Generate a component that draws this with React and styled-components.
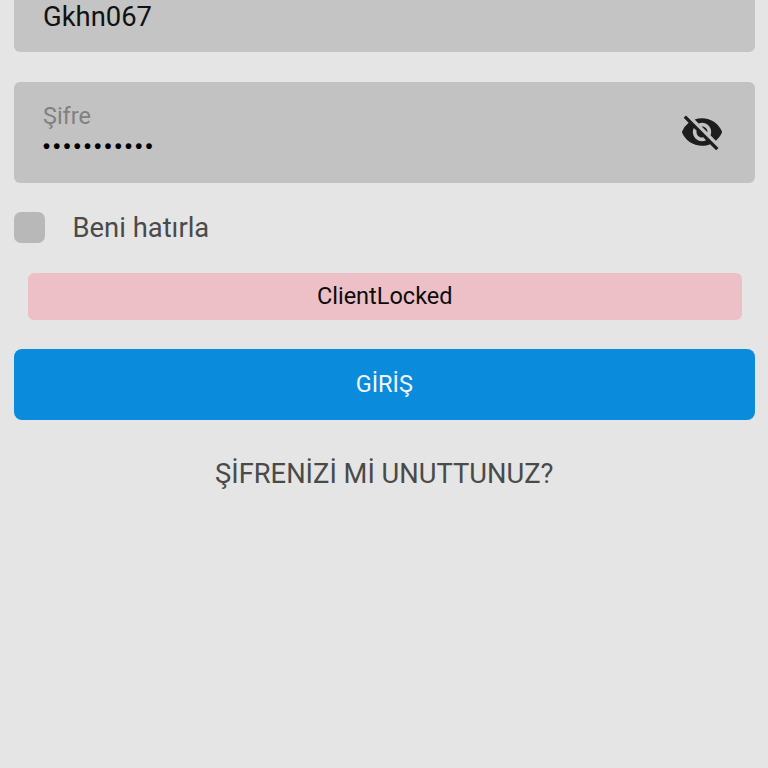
import React from "react";
import styled, { createGlobalStyle } from "styled-components";
import { MdVisibilityOff } from "react-icons/md";

const GlobalStyle = createGlobalStyle`
  html, body {
    margin: 0;
    padding: 0;
    height: 100%;
    overflow: hidden;
    background: #e5e5e5;
    font-family: Roboto, "Noto Sans", sans-serif;
  }
`;

const Page = styled.div`
  width: 768px;
  height: 768px;
  box-sizing: border-box;
  padding: 0 13px 0 13.5px;
  background: #e5e5e5;
  display: flex;
  flex-direction: column;
`;

const UserField = styled.div`
  height: 52px;
  box-sizing: border-box;
  padding: 0 29.5px 0;
  background: #c4c4c4;
  border-radius: 0 0 6px 6px;
  font-size: 27.4px;
  line-height: 34px;
  color: #111;
`;

const PasswordField = styled.div`
  height: 101px;
  margin-top: 29.5px;
  box-sizing: border-box;
  padding: 20px 31px 0 29.5px;
  background: #c2c2c2;
  border-radius: 6px;
  display: flex;
  justify-content: space-between;
`;

const FieldBody = styled.div`
  display: flex;
  flex-direction: column;
`;

const FieldLabel = styled.span`
  font-size: 23.4px;
  line-height: 28px;
  color: #808080;
`;

const Dots = styled.span`
  font-family: "Liberation Sans", sans-serif;
  font-size: 20px;
  font-weight: 700;
  line-height: 18px;
  margin-top: 7px;
  letter-spacing: 3.25px;
  color: #000;
`;

const EyeButton = styled.span`
  display: flex;
  margin-top: 8px;
  height: 44px;
  color: #1d1d1d;
`;

const RememberRow = styled.div`
  display: flex;
  align-items: center;
  gap: 28px;
  margin-top: 29px;
  height: 32px;
`;

const Checkbox = styled.span`
  width: 31px;
  height: 31px;
  border-radius: 7px;
  background: #b8b8b8;
`;

const RememberLabel = styled.span`
  font-size: 27.4px;
  color: #4a4a4a;
`;

const Alert = styled.div`
  margin: 29.5px 13.5px 0 14.5px;
  height: 47px;
  padding-bottom: 1px;
  box-sizing: border-box;
  border-radius: 6px;
  background: #ecc0c6;
  display: flex;
  align-items: center;
  justify-content: center;
  font-size: 23.5px;
  color: #0c0c0c;
`;

const LoginButton = styled.button`
  margin-top: 29px;
  height: 70.5px;
  padding: 0 0 1px;
  border: 0;
  border-radius: 8px;
  background: #0a8bdc;
  color: #f2f8fc;
  font-family: inherit;
  font-size: 23.5px;
`;

const ForgotLink = styled.a`
  margin-top: 36px;
  text-align: center;
  font-size: 27.3px;
  line-height: 36px;
  color: #4a4a4a;
`;

export default function App() {
  return (
    <>
      <GlobalStyle />
      <Page>
        <UserField>Gkhn067</UserField>
        <PasswordField>
          <FieldBody>
            <FieldLabel>Şifre</FieldLabel>
            <Dots>•••••••••••</Dots>
          </FieldBody>
          <EyeButton>
            <MdVisibilityOff size={44} />
          </EyeButton>
        </PasswordField>
        <RememberRow>
          <Checkbox />
          <RememberLabel>Beni hatırla</RememberLabel>
        </RememberRow>
        <Alert>ClientLocked</Alert>
        <LoginButton>GİRİŞ</LoginButton>
        <ForgotLink>ŞİFRENİZİ Mİ UNUTTUNUZ?</ForgotLink>
      </Page>
    </>
  );
}
